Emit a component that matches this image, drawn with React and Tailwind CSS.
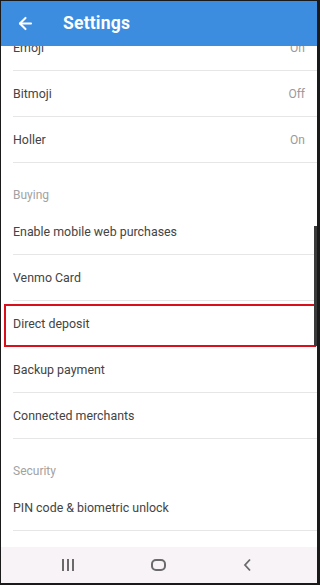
import React from 'react';
import { ArrowLeft } from 'lucide-react';

const Row = ({ label, value, highlight }) => (
    <div className="relative h-[46px] flex items-center justify-between pl-[12px] pr-[12px]">
        <span className="text-[12.4px] text-[#444]">{label}</span>
        {value && <span className="text-[12px] text-[#9a9a9a]">{value}</span>}
        <div className="absolute left-[12px] right-0 bottom-0 h-px bg-[#e6e6e6]" />
        {highlight && (
            <div className="absolute left-[3px] right-[1px] top-[3px] bottom-0 border-2 border-[#d8101c]" />
        )}
    </div>
);

const Section = ({ label }) => (
    <div className="h-[46px] flex items-end pb-[5px] pl-[12px]">
        <span className="text-[12px] text-[#a2a2a2]">{label}</span>
    </div>
);

const App = () => {
    return (
        <div
            className="relative w-[320px] h-[585px] flex flex-col overflow-hidden bg-white border-l border-t border-r-[3px] border-b-2 border-[#1a1a1a]"
            style={{ fontFamily: 'Roboto, "Noto Sans", sans-serif' }}
        >
            <div className="relative z-10 h-[45px] shrink-0 flex items-center bg-[#3c8de0] text-white">
                <ArrowLeft size={19} strokeWidth={2.6} className="ml-[15px]" />
                <span className="ml-[28px] text-[17.5px] font-bold tracking-[0.2px]">Settings</span>
            </div>

            <div className="flex-1 flex flex-col -mt-[21px]">
                <Row label="Emoji" value="On" />
                <Row label="Bitmoji" value="Off" />
                <Row label="Holler" value="On" />
                <Section label="Buying" />
                <Row label="Enable mobile web purchases" />
                <Row label="Venmo Card" />
                <Row label="Direct deposit" highlight />
                <Row label="Backup payment" />
                <Row label="Connected merchants" />
                <Section label="Security" />
                <Row label="PIN code & biometric unlock" />
            </div>

            <div className="h-[36px] shrink-0 flex items-center pl-[61px] bg-[#f7f3f7]">
                <div className="flex gap-[3px]">
                    <div className="w-[2px] h-[12px] bg-[#6a6a6a]" />
                    <div className="w-[2px] h-[12px] bg-[#6a6a6a]" />
                    <div className="w-[2px] h-[12px] bg-[#6a6a6a]" />
                </div>
                <div className="ml-[77px] w-[15px] h-[12px] rounded-[5px] border-2 border-[#6a6a6a]" />
                <svg width="9" height="14" viewBox="0 0 9 14" className="ml-[77px]">
                    <path d="M7 1.5 L2 7 L7 12.5" fill="none" stroke="#6a6a6a" strokeWidth="1.8" />
                </svg>
            </div>

            <div className="absolute right-0 top-[225px] w-[3px] h-[120px] bg-[#3a3a3a]" />
        </div>
    );
};

export default App;
